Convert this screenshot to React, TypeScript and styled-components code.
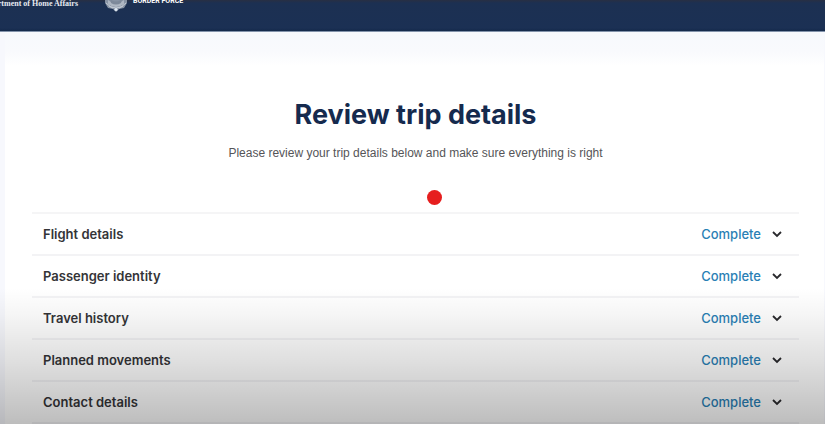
import React, { useState } from "react";
import styled, { createGlobalStyle } from "styled-components";

const GlobalStyle = createGlobalStyle`
  *, *::before, *::after { box-sizing: border-box; }
  html, body { margin: 0; }
  body {
    height: 100vh;
    overflow: hidden;
    background: #f7f8fd;
    font-family: Inter, "Liberation Sans", sans-serif;
  }
`;

const Page = styled.div`
  position: relative;
  height: 100vh;
  overflow: hidden;
`;

const Header = styled.header`
  display: flex;
  align-items: flex-end;
  height: 32px;
  overflow: hidden;
  background: linear-gradient(#282f43 0, #1c3052 3px, #1b3054 28px, #14294b 31px, #8393ab 31px);
`;

const Department = styled.div`
  display: flex;
  justify-content: flex-end;
  flex: none;
  width: 78px;
  padding-bottom: 23px;
  color: #e6eaf0;
  font: 700 8px/10px "Liberation Serif", serif;
  white-space: nowrap;
`;

const Crest = styled.svg`
  flex: none;
  width: 24px;
  height: 28px;
  margin: 0 5px 20px 26px;
`;

const Force = styled.div`
  padding-bottom: 26px;
  color: #fff;
  font: 700 7px/9px Roboto, "Liberation Sans", sans-serif;
  white-space: nowrap;
`;

const Card = styled.main`
  position: relative;
  margin: 0 1px 0 5px;
  padding: 64px 25px 0 27px;
  background: linear-gradient(#f7f9fd 0, #f9fafd 20px, #fff 34px);
`;

const Title = styled.h1`
  margin: 0;
  color: #152a4e;
  font-size: 27px;
  font-weight: 700;
  line-height: 38px;
  text-align: center;
`;

const Intro = styled.p`
  margin: 10px 0 50px;
  color: #555558;
  font-family: "Liberation Sans", sans-serif;
  font-size: 12px;
  line-height: 18px;
  text-align: center;
`;

const Marker = styled.span`
  position: absolute;
  top: 158px;
  left: calc(50% + 12px);
  width: 15px;
  height: 15px;
  border-radius: 50%;
  background: #e61e1e;
`;

const Sections = styled.ul`
  margin: 0;
  padding: 0;
  border-top: 2px solid #f5f5f6;
  list-style: none;
`;

const Section = styled.li`
  border-bottom: 2px solid #f3f3f5;
`;

const SectionButton = styled.button`
  display: flex;
  align-items: center;
  width: 100%;
  height: 40px;
  padding: 0 17px 0 11px;
  border: 0;
  background: none;
  color: #343437;
  font: 600 13px/20px Inter, "Liberation Sans", sans-serif;
  text-align: left;
  cursor: pointer;
`;

const Status = styled.span`
  margin-left: auto;
  color: #2a7fb5;
  font-weight: 500;
`;

const Chevron = styled.svg<{ $open: boolean }>`
  width: 10px;
  height: 8px;
  margin-left: 11px;
  transform: ${({ $open }) => ($open ? "rotate(180deg)" : "none")};
`;

const Shade = styled.div`
  position: absolute;
  inset: auto 0 0;
  height: 136px;
  background: linear-gradient(
    rgba(0, 0, 0, 0),
    rgba(0, 0, 0, 0.04) 20%,
    rgba(0, 0, 0, 0.13) 55%,
    rgba(0, 0, 0, 0.26)
  );
  pointer-events: none;
`;

const sections = [
  "Flight details",
  "Passenger identity",
  "Travel history",
  "Planned movements",
  "Contact details",
];

export default function App() {
  const [open, setOpen] = useState<string | null>(null);

  return (
    <Page>
      <GlobalStyle />
      <Header>
        <Department>Department of Home Affairs</Department>
        <Crest viewBox="0 0 24 28" aria-hidden="true">
          <path d="M1 0h22v19l-3 5-5 1-3 3-3-3-5-1-3-5z" fill="#8793a4" />
          <path d="M4 16q8 7 16 0v4q-8 6-16 0z" fill="#aeb7c3" />
          <path d="M6 15q6 5 12 0l-1 4q-5 3-10 0z" fill="#7d899a" />
          <path d="M2 19q4 5 10 5t10-5M5 22l4 2m10-2l-4 2" fill="none" stroke="#c3cbd5" />
          <circle cx="12" cy="25.5" r="1.6" fill="#dfe9f4" />
        </Crest>
        <Force>BORDER FORCE</Force>
      </Header>
      <Card>
        <Title>Review trip details</Title>
        <Intro>Please review your trip details below and make sure everything is right</Intro>
        <Marker />
        <Sections>
          {sections.map((name) => (
            <Section key={name}>
              <SectionButton
                type="button"
                aria-expanded={open === name}
                onClick={() => setOpen(open === name ? null : name)}
              >
                {name}
                <Status>Complete</Status>
                <Chevron $open={open === name} viewBox="0 0 10 8" aria-hidden="true">
                  <path d="M1 2l4 4 4-4" fill="none" stroke="#29292c" strokeWidth="1.8" />
                </Chevron>
              </SectionButton>
            </Section>
          ))}
        </Sections>
      </Card>
      <Shade />
    </Page>
  );
}
